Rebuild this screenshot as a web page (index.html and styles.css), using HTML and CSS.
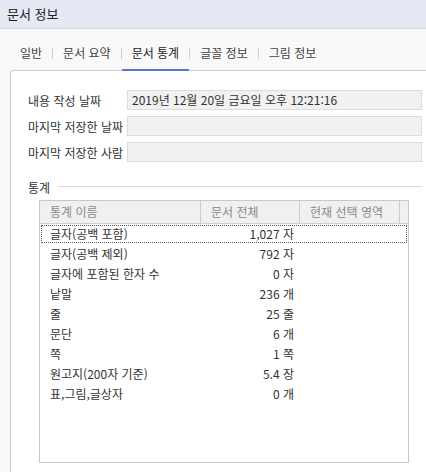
FILE: index.html
```html
<!DOCTYPE html>
<html lang="ko">
<head>
<meta charset="utf-8">
<title>문서 정보</title>
<link rel="stylesheet" href="styles.css">
</head>
<body>
<div class="window">
  <div class="titlebar">문서 정보</div>
  <div class="tabs">
    <div class="tab">일반</div><span class="sep"></span>
    <div class="tab">문서 요약</div><span class="sep"></span>
    <div class="tab active">문서 통계</div><span class="sep"></span>
    <div class="tab">글꼴 정보</div><span class="sep"></span>
    <div class="tab">그림 정보</div>
  </div>
  <div class="panel">
    <div class="fields">
      <div class="label">내용 작성 날짜</div><div class="box">2019년 12월 20일 금요일 오후 12:21:16</div>
      <div class="label">마지막 저장한 날짜</div><div class="box"></div>
      <div class="label">마지막 저장한 사람</div><div class="box"></div>
    </div>
    <div class="section"><span class="section-title">통계</span><span class="rule"></span></div>
    <div class="list">
      <div class="head">
        <div class="hcell">통계 이름</div>
        <div class="hcell">문서 전체</div>
        <div class="hcell">현재 선택 영역</div>
        <div class="hcell filler"></div>
      </div>
      <div class="rows">
        <div class="row focused"><span class="name">글자(공백 포함)</span><span class="val">1,027 자</span></div>
        <div class="row"><span class="name">글자(공백 제외)</span><span class="val">792 자</span></div>
        <div class="row"><span class="name">글자에 포함된 한자 수</span><span class="val">0 자</span></div>
        <div class="row"><span class="name">낱말</span><span class="val">236 개</span></div>
        <div class="row"><span class="name">줄</span><span class="val">25 줄</span></div>
        <div class="row"><span class="name">문단</span><span class="val">6 개</span></div>
        <div class="row"><span class="name">쪽</span><span class="val">1 쪽</span></div>
        <div class="row"><span class="name">원고지(200자 기준)</span><span class="val">5.4 장</span></div>
        <div class="row"><span class="name">표,그림,글상자</span><span class="val">0 개</span></div>
      </div>
    </div>
  </div>
</div>
</body>
</html>
```
FILE: styles.css
```css
html, body {
  margin: 0;
  padding: 0;
}
body {
  background: #f9f9f9;
  font-family: "Noto Sans CJK KR", "Noto Sans", sans-serif;
  font-size: 12px;
  color: #333;
  overflow: hidden;
}
.window {
  display: flex;
  flex-direction: column;
  height: 100vh;
}
.titlebar {
  height: 28px;
  line-height: 28px;
  padding-left: 7px;
  background: #e6e8f4;
  border-bottom: 1px solid #d2d5e8;
  font-size: 13px;
  color: #222;
}
.tabs {
  display: flex;
  height: 42px;
  padding-left: 10px;
  position: relative;
  z-index: 1;
}
.tab {
  display: flex;
  align-items: center;
  padding: 6px 10px 0;
  border-bottom: 2px solid transparent;
  color: #444;
  font-size: 12px;
}
.tab.active {
  border-bottom-color: #5b79d3;
  color: #222;
}
.sep {
  width: 1px;
  height: 11px;
  background: #cfcfcf;
  align-self: center;
  margin-top: 6px;
}
.panel {
  flex: 1;
  margin-top: -1px;
  margin-left: 10px;
  background: #fff;
  border-top: 1px solid #cccccc;
  border-left: 1px solid #cccccc;
  border-top-left-radius: 4px;
  padding: 19px 4px 0 17px;
}
.fields {
  display: grid;
  grid-template-columns: 99px 1fr;
  grid-auto-rows: 20px;
  row-gap: 6px;
}
.label {
  display: flex;
  align-items: center;
  color: #333;
  white-space: nowrap;
}
.box {
  box-sizing: border-box;
  background: #f1f1f1;
  border: 1px solid #dcdcdc;
  padding-left: 4px;
  line-height: 18px;
  color: #333;
}
.section {
  display: flex;
  align-items: center;
  margin-top: 17px;
  height: 16px;
}
.section-title {
  color: #333;
}
.rule {
  flex: 1;
  height: 1px;
  background: #dadada;
  margin-left: 8px;
  margin-top: -1px;
}
.list {
  margin-top: 5px;
  margin-left: 11px;
  width: 370px;
  height: 263px;
  box-sizing: border-box;
  border: 1px solid #c8c8c8;
  background: #fff;
}
.head {
  display: grid;
  grid-template-columns: 161px 99px 100px 8px;
  height: 22px;
  border-bottom: 1px solid #d0d0d0;
  background: #f0f0f0;
}
.hcell {
  border-right: 1px solid #cdcdcd;
  padding-left: 10px;
  line-height: 22px;
  color: #8a8a8a;
  white-space: nowrap;
}
.hcell.filler {
  border-right: none;
  padding: 0;
}
.rows {
  display: flex;
  flex-direction: column;
}
.row {
  display: grid;
  grid-template-columns: 161px 99px;
  height: 20px;
  line-height: 20px;
}
.row.focused {
  outline: 1px dotted #555;
  outline-offset: -2px;
}
.name {
  padding-left: 10px;
  white-space: nowrap;
}
.val {
  text-align: right;
  padding-right: 6px;
  white-space: nowrap;
}
```
